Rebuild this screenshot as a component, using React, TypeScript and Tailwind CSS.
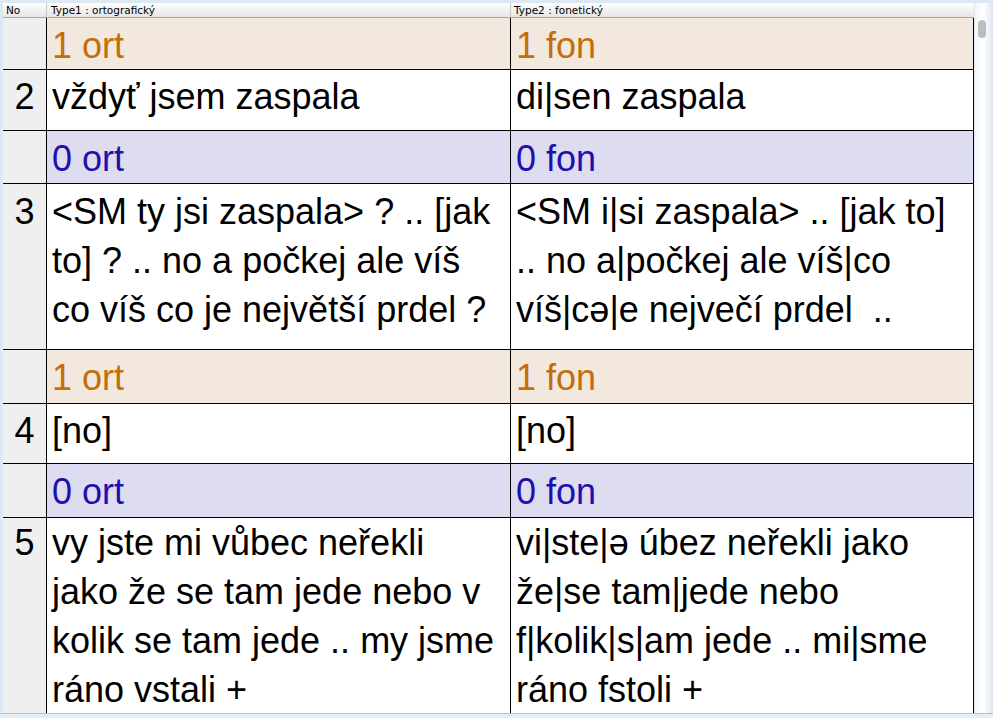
import React from "react";

type Row =
  | { kind: "ort"; tone: "beige" | "lilac"; left: string; right: string; h: string }
  | { kind: "text"; no: string; left: string[]; right: string[]; h: string; pt: string };

const rows: Row[] = [
  { kind: "ort", tone: "beige", left: "1 ort", right: "1 fon", h: "h-[52px]" },
  { kind: "text", no: "2", left: ["vždyť jsem zaspala"], right: ["di|sen zaspala"], h: "h-[61px]", pt: "pt-[2px]" },
  { kind: "ort", tone: "lilac", left: "0 ort", right: "0 fon", h: "h-[53px]" },
  {
    kind: "text",
    no: "3",
    left: ["<SM ty jsi zaspala> ? .. [jak", "to] ? .. no a počkej ale víš", "co víš co je největší prdel ?"],
    right: ["<SM i|si zaspala> .. [jak to]", ".. no a|počkej ale víš|co", "víš|cə|e nejvečí prdel  .."],
    h: "h-[166px]",
    pt: "pt-[3px]",
  },
  { kind: "ort", tone: "beige", left: "1 ort", right: "1 fon", h: "h-[54px]" },
  { kind: "text", no: "4", left: ["[no]"], right: ["[no]"], h: "h-[60px]", pt: "pt-[2px]" },
  { kind: "ort", tone: "lilac", left: "0 ort", right: "0 fon", h: "h-[54px]" },
  {
    kind: "text",
    no: "5",
    left: ["vy jste mi vůbec neřekli", "jako že se tam jede nebo v", "kolik se tam jede .. my jsme", "ráno vstali +"],
    right: ["vi|ste|ə úbez neřekli jako", "že|se tam|jede nebo", "f|kolik|s|am jede .. mi|sme", "ráno fstoli +"],
    h: "h-[240px]",
    pt: "pt-0",
  },
];

const cell = "pl-[5px] leading-[49px] whitespace-pre overflow-hidden";

export default function App() {
  return (
    <div className="w-[993px] h-[718px] bg-[#dce8f3] flex flex-col overflow-hidden font-['Liberation_Sans',Arial,sans-serif]">
      <div className="flex h-[713px] pt-[3px] pl-[3px] pr-[2px]">
        {/* table */}
        <div className="w-[971px] flex flex-col overflow-hidden bg-white">
          {/* header */}
          <div className="flex h-[15px] shrink-0 border-b border-[#a8a8a8] bg-gradient-to-b from-white to-[#e6e6e6] font-['DejaVu_Sans',sans-serif] text-[10.5px] leading-[14px] text-black">
            <div className="w-[44px] border-r border-[#c8c8c8] pl-[3px]">No</div>
            <div className="w-[464px] border-r border-[#c8c8c8] pl-[4px]">Type1 : ortografický</div>
            <div className="w-[463px] pl-[3px]">Type2 : fonetický</div>
          </div>

          {rows.map((r, idx) =>
            r.kind === "ort" ? (
              <div key={idx} className={`flex shrink-0 border-b border-black text-[36px] ${r.h}`}>
                <div className="w-[44px] border-r border-black bg-[#efefef]" />
                <div
                  className={`w-[464px] border-r border-black pt-[3px] ${cell} ${
                    r.tone === "beige" ? "bg-[#f3e8dd] text-[#c26e0c]" : "bg-[#dddcf1] text-[#1f10ad]"
                  }`}
                >
                  {r.left}
                </div>
                <div
                  className={`w-[463px] border-r border-black pt-[3px] ${cell} ${
                    r.tone === "beige" ? "bg-[#f3e8dd] text-[#c26e0c]" : "bg-[#dddcf1] text-[#1f10ad]"
                  }`}
                >
                  {r.right}
                </div>
              </div>
            ) : (
              <div key={idx} className={`flex shrink-0 border-b border-black text-[36px] text-black ${r.h}`}>
                <div className={`w-[44px] border-r border-black bg-[#efefef] leading-[49px] text-center ${r.pt}`}>
                  {r.no}
                </div>
                <div className={`w-[464px] border-r border-black bg-white ${cell} ${r.pt}`}>
                  {r.left.map((l, i) => (
                    <div key={i}>{l}</div>
                  ))}
                </div>
                <div className={`w-[463px] border-r border-black bg-white ${cell} ${r.pt}`}>
                  {r.right.map((l, i) => (
                    <div key={i}>{l}</div>
                  ))}
                </div>
              </div>
            )
          )}
        </div>

        {/* scrollbar */}
        <div className="w-[17px] bg-gradient-to-r from-[#f1f6fb] via-white to-[#e4edf6] border-l border-[#e3e9ef] pt-[17px] pl-[3px]">
          <div className="w-[8px] h-[18px] rounded-full bg-[#bdbdbd]" />
        </div>
      </div>
      <div className="h-[5px] border-t border-[#a9c3dc] bg-[#e4eef7]" />
    </div>
  );
}
